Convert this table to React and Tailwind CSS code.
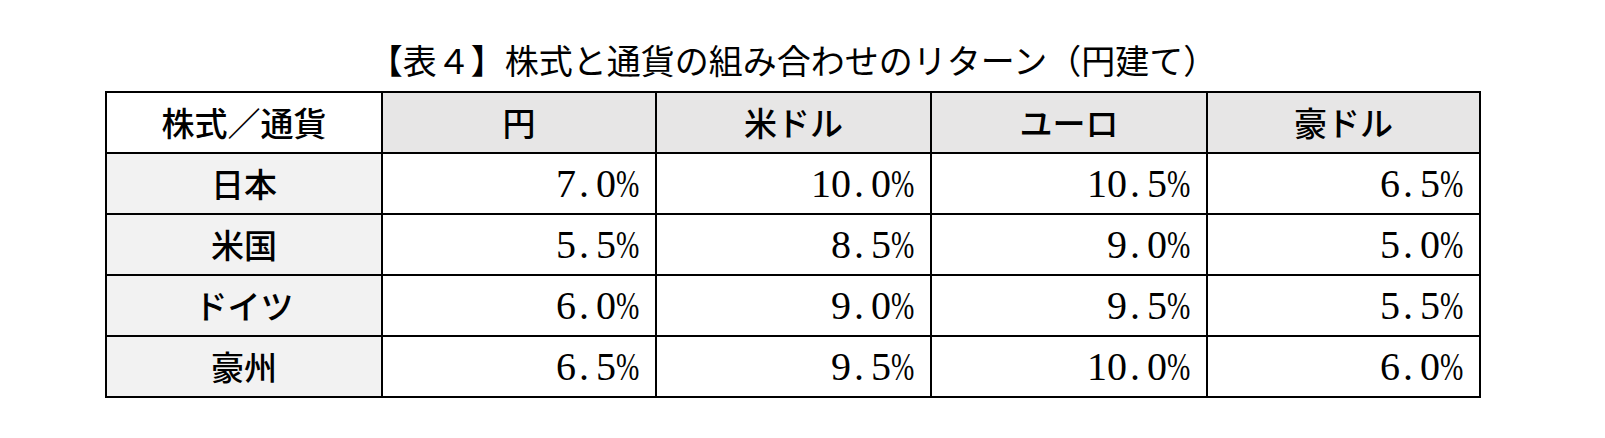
import React from "react";

const cols = ["株式／通貨", "円", "米ドル", "ユーロ", "豪ドル"];
const rows = [
  ["日本", "7.0%", "10.0%", "10.5%", "6.5%"],
  ["米国", "5.5%", "8.5%", "9.0%", "5.0%"],
  ["ドイツ", "6.0%", "9.0%", "9.5%", "5.5%"],
  ["豪州", "6.5%", "9.5%", "10.0%", "6.0%"],
];

const gothic = { fontFamily: '"Noto Sans CJK JP", "Noto Sans", sans-serif' };

function Num({ v }) {
  return (
    <span className="inline-flex items-baseline" style={{ fontFamily: '"Liberation Serif", "DejaVu Serif", serif' }}>
      {v.split("").map((c, i) => {
        if (c === "%")
          return (
            <span key={i} className="inline-block w-[22px] text-left">
              <span className="inline-block origin-left scale-x-[0.7]">%</span>
            </span>
          );
        if (c === ".")
          return (
            <span key={i} className="inline-block w-[20px] pl-[3px] text-left">
              .
            </span>
          );
        return (
          <span key={i} className="inline-block w-[20px] text-center">
            {c}
          </span>
        );
      })}
    </span>
  );
}

export default function App() {
  return (
    <div className="w-[1605px] h-[438px] bg-white pt-[43px]">
      <div className="ml-[105px] w-[1376px]">
        <div
          className="h-[34px] text-center text-[34px] leading-[34px] text-black"
          style={gothic}
        >
          【表４】株式と通貨の組み合わせのリターン（円建て）
        </div>
        <div className="mt-[14px] grid grid-cols-[274px_272px_273px_274px_271px] auto-rows-[59px] gap-[2px] bg-black p-[2px]">
          {cols.map((c, i) => (
            <div
              key={c}
              className={`flex items-center justify-center text-[33px] font-medium text-black ${
                i === 0 ? "bg-white" : "bg-[#e7e6e6]"
              }`}
              style={gothic}
            >
              {c}
            </div>
          ))}
          {rows.map((r) =>
            r.map((v, i) =>
              i === 0 ? (
                <div
                  key={r[0] + i}
                  className="flex items-center justify-center bg-[#f2f2f2] text-[33px] font-medium text-black"
                  style={gothic}
                >
                  {v}
                </div>
              ) : (
                <div
                  key={r[0] + i}
                  className="flex items-center justify-end bg-white pr-[17px] text-[40px] leading-none text-black"
                >
                  <Num v={v} />
                </div>
              )
            )
          )}
        </div>
      </div>
    </div>
  );
}
